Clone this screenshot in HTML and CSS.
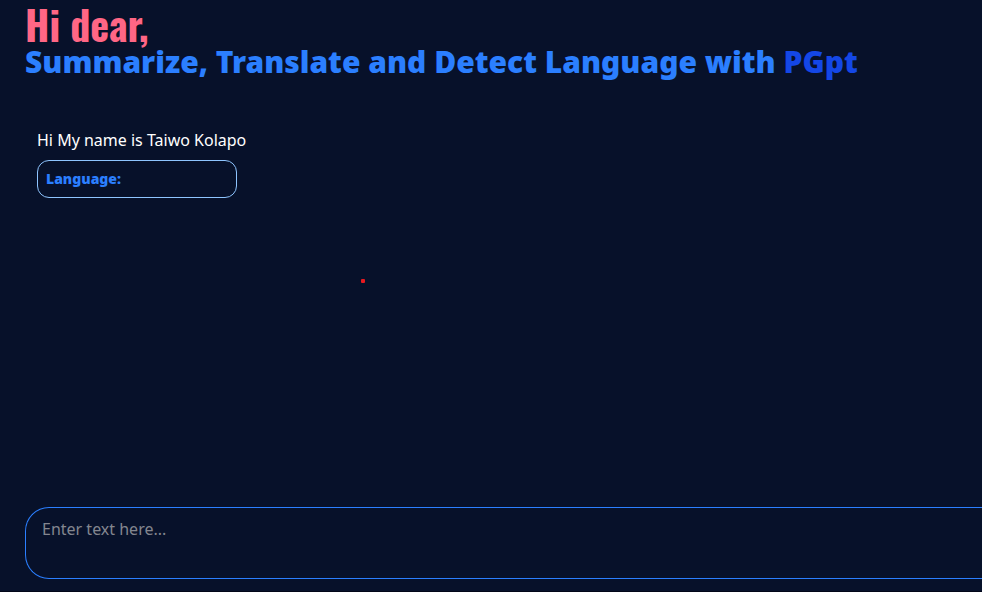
FILE: index.html
```html
<!DOCTYPE html>
<html lang="en">
<head>
<meta charset="utf-8">
<meta name="viewport" content="width=device-width, initial-scale=1">
<title>PGpt</title>
<link rel="stylesheet" href="styles.css">
</head>
<body>
<div class="app">
  <header class="intro">
    <p class="greeting">Hi dear,</p>
    <h1 class="headline">Summarize, Translate and Detect Language with <span class="brand">PGpt</span></h1>
  </header>
  <main class="chat">
    <article class="message">
      <p class="message-text">Hi My name is Taiwo Kolapo</p>
      <p class="language">Language:</p>
    </article>
    <span class="dot"></span>
  </main>
  <form class="composer">
    <textarea class="prompt" aria-label="Text" placeholder="Enter text here..."></textarea>
  </form>
</div>
</body>
</html>
```

FILE: styles.css
```css
* {
  box-sizing: border-box;
  margin: 0;
}

body {
  background: #07112a;
  color: #fff;
  font-family: "Noto Sans", "Open Sans", sans-serif;
  font-size: 16px;
  line-height: 24px;
  overflow: hidden;
}

.app {
  display: flex;
  flex-direction: column;
  min-height: 100vh;
  padding: 4px 0 12px 25px;
  border-bottom: 1px solid #020618;
}

.greeting {
  color: #ff6685;
  font-family: "Oswald", "Liberation Sans Narrow", "Roboto Condensed", sans-serif;
  font-size: 40px;
  font-weight: 700;
  line-height: 40px;
}

.headline {
  color: #2b7fff;
  font-family: "Noto Sans", sans-serif;
  font-size: 30px;
  font-weight: 900;
  line-height: 36px;
  white-space: nowrap;
}

.brand {
  color: #1447e6;
}

.chat {
  position: relative;
  flex: 1;
  padding: 48px 12px 0;
}

.message {
  display: flex;
  flex-direction: column;
  align-items: flex-start;
  gap: 8px;
}

.language {
  width: 200px;
  padding: 6px 8px;
  border: 1px solid #8ec5ff;
  border-radius: 12px;
  color: #2b7fff;
  font-size: 14px;
  font-weight: 900;
}

.dot {
  position: absolute;
  top: 199px;
  left: 336px;
  width: 4px;
  height: 4px;
  border-radius: 1px;
  background: #e7191f;
}

.composer {
  display: flex;
}

.prompt {
  flex: 1;
  height: 72px;
  padding: 9px 16px;
  border: 1px solid #2b7fff;
  border-right: 0;
  border-radius: 24px 0 0 24px;
  outline: 0;
  background: transparent;
  color: #fff;
  font: inherit;
  resize: none;
}

.prompt::placeholder {
  color: #83868f;
}
```
